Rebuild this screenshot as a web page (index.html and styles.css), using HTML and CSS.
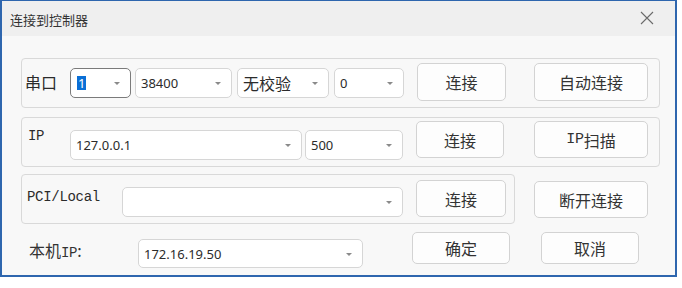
FILE: index.html
```html
<!DOCTYPE html>
<html>
<head>
<meta charset="utf-8">
<link rel="stylesheet" href="styles.css">
</head>
<body>
<div class="window">
  <div class="titlebar">
    <span class="title">连接到控制器</span>
    <svg class="close" width="14" height="14" viewBox="0 0 14 14"><path d="M1 1 L13 13 M13 1 L1 13" stroke="#6a6a6a" stroke-width="1.1" fill="none"/></svg>
  </div>
  <div class="content">
    <div class="group g1">
      <div class="label cn l1">串口</div>
      <div class="combo focus w61"><span class="ctext"><span class="sel">1</span></span><i class="arrow"></i></div>
      <div class="combo w97 ml4"><span class="ctext">38400</span><i class="arrow"></i></div>
      <div class="combo w92 ml5"><span class="ctext cn">无校验</span><i class="arrow"></i></div>
      <div class="combo w70 ml5"><span class="ctext">0</span><i class="arrow"></i></div>
      <div class="btn w89 ml13">连接</div>
      <div class="btn w114 ml28">自动连接</div>
    </div>
    <div class="group g2">
      <div class="label mono l2">IP</div>
      <div class="combo w232"><span class="ctext">127.0.0.1</span><i class="arrow"></i></div>
      <div class="combo w98 ml3"><span class="ctext">500</span><i class="arrow"></i></div>
      <div class="btn w88 ml13">连接</div>
      <div class="btn w114 ml30"><span class="mono">IP</span>扫描</div>
    </div>
    <div class="row3">
      <div class="group g3">
        <div class="label mono l3">PCI/Local</div>
        <div class="combo w281"><span class="ctext"></span><i class="arrow"></i></div>
        <div class="btn w90 ml13">连接</div>
      </div>
      <div class="btn w114 ml19 b3">断开连接</div>
    </div>
    <div class="row4">
      <div class="label cn l4">本机<span class="mono">IP</span>:</div>
      <div class="combo w225"><span class="ctext">172.16.19.50</span><i class="arrow"></i></div>
      <div class="btn w98 ml49">确定</div>
      <div class="btn w98 ml31">取消</div>
    </div>
  </div>
</div>
</body>
</html>
```
FILE: styles.css
```css
html, body {
  margin: 0;
  padding: 0;
  background: #ffffff;
}
body {
  font-family: "Noto Sans CJK SC", "Noto Sans", sans-serif;
  color: #2b2b2b;
}
.window {
  width: 677px;
  height: 277px;
  box-sizing: border-box;
  border: 2px solid #2e66ae;
  border-top-width: 1px;
  background: #f8f8f8;
  display: flex;
  flex-direction: column;
}
.titlebar {
  height: 35px;
  background: #efefef;
  display: flex;
  align-items: center;
  padding-left: 8px;
  padding-right: 21px;
  flex: none;
}
.title {
  font-size: 13px;
  color: #333;
  flex: 1;
  margin-top: 1px;
}
.close {
  display: block;
  margin-top: -2px;
}
.content {
  padding: 22px 0 0 19px;
  display: flex;
  flex-direction: column;
}
.group {
  box-sizing: border-box;
  height: 50px;
  border: 1px solid #d9d9d9;
  border-radius: 4px;
  display: flex;
  align-items: flex-start;
}
.g1 { width: 639px; }
.g2 { width: 639px; margin-top: 9px; }
.row3 { display: flex; align-items: flex-start; margin-top: 7px; }
.g3 { width: 494px; }
.row4 { display: flex; align-items: flex-start; margin-top: 8px; }

.label {
  line-height: 20px;
  white-space: nowrap;
}
.cn { font-size: 16px; }
.mono {
  font-family: "Liberation Mono", monospace;
  font-size: 14px;
  letter-spacing: -0.3px;
}
.l1 { width: 45px; margin-left: 3px; margin-top: 13px; }
.l2 { width: 42px; margin-left: 6px; margin-top: 8px; }
.l3 { width: 95px; margin-left: 5px; margin-top: 12px; }
.l4 { width: 109px; margin-left: 8px; margin-top: 8px; color: #333; }
.l4 .mono { font-size: 14px; }

.combo {
  box-sizing: border-box;
  height: 30px;
  background: #ffffff;
  border: 1px solid #d6d6d6;
  border-radius: 5px;
  display: flex;
  align-items: center;
  padding-left: 5px;
  padding-right: 10px;
  font-size: 13px;
  font-family: "Noto Sans", "Noto Sans CJK SC", sans-serif;
  color: #2b2b2b;
}
.combo.focus { border-color: #7b7b7b; }
.ctext { flex: 1; white-space: nowrap; line-height: 18px; }
.ctext.cn { font-family: "Noto Sans CJK SC", sans-serif; font-size: 16px; }
.sel {
  background: #0a6fd6;
  color: #fff;
  padding: 0 1px;
  display: inline-block;
  line-height: 14px;
  margin-left: 1px;
}
.arrow {
  width: 0;
  height: 0;
  border-left: 3px solid transparent;
  border-right: 3px solid transparent;
  border-top: 3px solid #8a8a8a;
  margin-top: 1px;
}
.g1 .combo { margin-top: 9px; }
.g2 .combo { margin-top: 12px; }
.g3 .combo { margin-top: 12px; }
.row4 .combo { margin-top: 7px; height: 29px; }

.btn {
  box-sizing: border-box;
  height: 37px;
  background: #fdfdfd;
  border: 1px solid #d3d3d3;
  border-radius: 5px;
  display: flex;
  align-items: center;
  justify-content: center;
  font-size: 16px;
  color: #333;
  white-space: nowrap;
}
.g1 .btn { margin-top: 4px; height: 38px; }
.g2 .btn { margin-top: 3px; }
.g3 .btn { margin-top: 5px; }
.b3 { margin-top: 7px; }
.row4 .btn { height: 32px; }
.btn .mono { font-size: 15px; }

.w61 { width: 61px; }
.w70 { width: 70px; }
.w88 { width: 88px; }
.w89 { width: 89px; }
.w90 { width: 90px; }
.w92 { width: 92px; }
.w97 { width: 97px; }
.w98 { width: 98px; }
.w114 { width: 114px; }
.w225 { width: 225px; }
.w232 { width: 232px; }
.w281 { width: 281px; }
.ml3 { margin-left: 3px; }
.ml4 { margin-left: 4px; }
.ml5 { margin-left: 5px; }
.ml13 { margin-left: 13px; }
.ml19 { margin-left: 19px; }
.ml28 { margin-left: 28px; }
.ml30 { margin-left: 30px; }
.ml31 { margin-left: 31px; }
.ml49 { margin-left: 49px; }
```
